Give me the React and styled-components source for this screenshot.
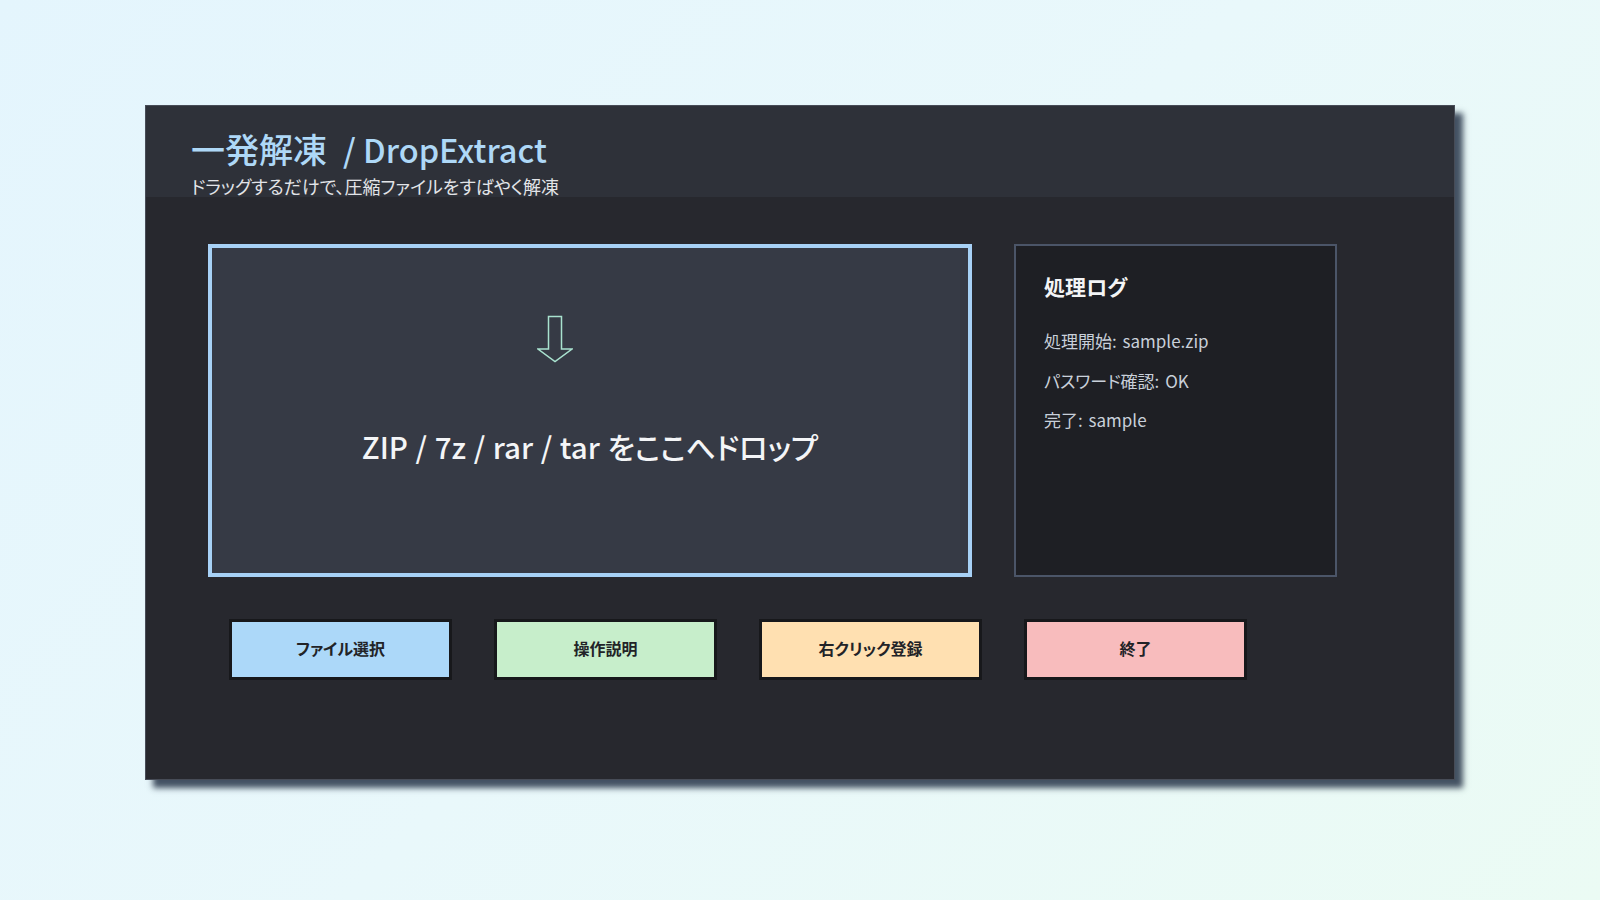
import React from 'react';
import styled, { createGlobalStyle } from 'styled-components';

const GlobalStyle = createGlobalStyle`
  html, body {
    margin: 0;
    padding: 0;
  }
  body {
    font-family: 'Noto Sans CJK JP', 'Noto Sans', sans-serif;
    font-feature-settings: 'palt';
  }
`;

const Page = styled.div`
  min-height: 100vh;
  box-sizing: border-box;
  padding-top: 105px;
  background: linear-gradient(135deg, #e4f5fd 0%, #e9f8fb 50%, #ebfbf4 100%);
`;

const Window = styled.div`
  width: 1310px;
  height: 675px;
  margin: 0 auto;
  box-sizing: border-box;
  border: 1px solid #474c57;
  background: #27282e;
  box-shadow: 8px 8px 6px rgba(38, 52, 72, 0.85);
  display: flex;
  flex-direction: column;
`;

const Header = styled.header`
  height: 91px;
  flex-shrink: 0;
  box-sizing: border-box;
  background: #2e3139;
  padding: 22px 0 0 45px;
  display: flex;
  flex-direction: column;
  gap: 6px;
`;

const Title = styled.h1`
  margin: 0;
  font-size: 34px;
  line-height: 41px;
  font-weight: 500;
  color: #aed8f7;
  display: flex;
  align-items: baseline;
`;

const TitleLatin = styled.span`
  font-size: 32.5px;
  margin-left: ${props => props.gap}px;
`;

const Subtitle = styled.p`
  margin: 0;
  font-size: 18px;
  line-height: 22px;
  font-weight: 400;
  color: #e2e4e8;
`;

const Body = styled.main`
  flex: 1;
  padding: 47px 0 0 62px;
  display: flex;
  flex-direction: column;
  gap: 42px;
`;

const TopRow = styled.div`
  display: flex;
  gap: 42px;
`;

const DropZone = styled.section`
  width: 764px;
  height: 333px;
  box-sizing: border-box;
  border: 4px solid #a7d1f6;
  background: #363a45;
  padding-top: 67px;
  display: flex;
  flex-direction: column;
  align-items: center;
`;

const ArrowIcon = styled.svg`
  margin-right: 70px;
  display: block;
`;

const DropText = styled.div`
  margin-top: 62px;
  font-size: 29.5px;
  line-height: 42px;
  font-weight: 500;
  color: #f4f5f7;
  word-spacing: 1px;
`;

const LogPanel = styled.aside`
  width: 323px;
  height: 333px;
  box-sizing: border-box;
  border: 2px solid #4b5568;
  background: #1e1f24;
  padding: 26px 0 0 28px;
`;

const LogTitle = styled.h2`
  margin: 0 0 29px;
  font-size: 21px;
  line-height: 28px;
  font-weight: 700;
  color: #f3f4f6;
`;

const LogLine = styled.div`
  font-size: 17px;
  line-height: 24px;
  color: #c9d0da;
  word-spacing: 2px;
  & + & {
    margin-top: 15.5px;
  }
`;

const ButtonRow = styled.div`
  display: flex;
  gap: 42px;
  padding-left: 21px;
`;

const ActionButton = styled.button`
  width: 223px;
  height: 61px;
  box-sizing: border-box;
  border: 3px solid #17181b;
  background: ${props => props.color};
  font-family: inherit;
  font-feature-settings: 'palt';
  font-size: 16px;
  font-weight: 700;
  color: #222327;
  cursor: pointer;
  padding: 0 0 4px;
`;

const buttons = [
  { label: 'ファイル選択', color: '#acd8f9' },
  { label: '操作説明', color: '#c7eecb' },
  { label: '右クリック登録', color: '#ffe0b1' },
  { label: '終了', color: '#f8bcbd' }
];

const logs = ['処理開始: sample.zip', 'パスワード確認: OK', '完了: sample'];

function App() {
  return (
    <>
      <GlobalStyle />
      <Page>
        <Window>
          <Header>
            <Title>
              一発解凍
              <TitleLatin gap={16}>/ DropExtract</TitleLatin>
            </Title>
            <Subtitle>ドラッグするだけで、圧縮ファイルをすばやく解凍</Subtitle>
          </Header>
          <Body>
            <TopRow>
              <DropZone>
                <ArrowIcon width="36" height="48" viewBox="0 0 36 48">
                  <path
                    d="M11.5 1.5 H24.5 V34 H35 L18 46.5 L1 34 H11.5 Z"
                    fill="none"
                    stroke="#a9e2cf"
                    strokeWidth="1.5"
                    strokeLinejoin="miter"
                  />
                </ArrowIcon>
                <DropText>ZIP / 7z / rar / tar をここへドロップ</DropText>
              </DropZone>
              <LogPanel>
                <LogTitle>処理ログ</LogTitle>
                {logs.map(line => (
                  <LogLine key={line}>{line}</LogLine>
                ))}
              </LogPanel>
            </TopRow>
            <ButtonRow>
              {buttons.map(b => (
                <ActionButton key={b.label} color={b.color}>
                  {b.label}
                </ActionButton>
              ))}
            </ButtonRow>
          </Body>
        </Window>
      </Page>
    </>
  );
}

export default App;
